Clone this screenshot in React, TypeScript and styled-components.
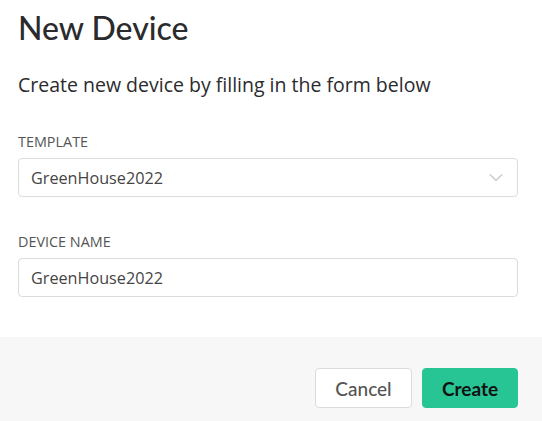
import React from 'react';
import styled, { createGlobalStyle } from 'styled-components';

const GlobalStyle = createGlobalStyle`
    body {
        margin: 0;
        background: #ffffff;
        font-family: "Open Sans", "Noto Sans", sans-serif;
    }
`;

export default function App() {
    return (
        <>
            <GlobalStyle />
            <Modal>
                <Body>
                    <Title>New Device</Title>
                    <Subtitle>Create new device by filling in the form below</Subtitle>
                    <Field>
                        <Label>TEMPLATE</Label>
                        <SelectBox>
                            <FieldText>GreenHouse2022</FieldText>
                            <svg width="14" height="9" viewBox="0 0 14 9" fill="none">
                                <path d="M1 1.5 L7 7.5 L13 1.5" stroke="#c4c4c4" strokeWidth="1.2" />
                            </svg>
                        </SelectBox>
                    </Field>
                    <Field>
                        <Label>DEVICE NAME</Label>
                        <InputBox>
                            <FieldText>GreenHouse2022</FieldText>
                        </InputBox>
                    </Field>
                </Body>
                <Footer>
                    <Button>Cancel</Button>
                    <Button primary>Create</Button>
                </Footer>
            </Modal>
        </>
    );
}

const Modal = styled.div`
    width: 542px;
    height: 421px;
    display: flex;
    flex-direction: column;
    overflow: hidden;
`;

const Body = styled.div`
    padding: 8px 24px 0 18px;
    height: 329px;
`;

const Title = styled.h1`
    margin: 0;
    font-family: "Lato", sans-serif;
    font-weight: 500;
    font-size: 32px;
    line-height: 40px;
    color: #2b2b2e;
`;

const Subtitle = styled.p`
    margin: 24px 0 0;
    font-size: 19.5px;
    line-height: 26px;
    color: #2b2b2e;
`;

const Field = styled.div`
    margin-top: 34px;
    & + & {
        margin-top: 35px;
    }
`;

const Label = styled.div`
    font-size: 14.4px;
    line-height: 20px;
    color: #555555;
    margin-bottom: 6px;
`;

const SelectBox = styled.div`
    height: 39px;
    box-sizing: border-box;
    border: 1px solid #dcdcdc;
    border-radius: 4px;
    display: flex;
    align-items: center;
    justify-content: space-between;
    padding: 0 14px 0 12px;
`;

const InputBox = styled(SelectBox)``;

const FieldText = styled.span`
    font-size: 16.2px;
    color: #454545;
`;

const Footer = styled.div`
    flex: 1;
    background: #f7f7f7;
    display: flex;
    justify-content: flex-end;
    align-items: flex-start;
    gap: 10px;
    padding: 31px 24px 0 0;
`;

const Button = styled.button<{ primary?: boolean }>`
    width: ${p => (p.primary ? '96px' : '97px')};
    height: 40px;
    border-radius: 4px;
    border: 1px solid ${p => (p.primary ? '#27c594' : '#dcdcdc')};
    background: ${p => (p.primary ? '#27c594' : '#ffffff')};
    color: ${p => (p.primary ? '#111111' : '#555555')};
    font-family: "Lato", sans-serif;
    font-size: 19px;
    font-weight: ${p => (p.primary ? 700 : 500)};
    cursor: pointer;
`;
